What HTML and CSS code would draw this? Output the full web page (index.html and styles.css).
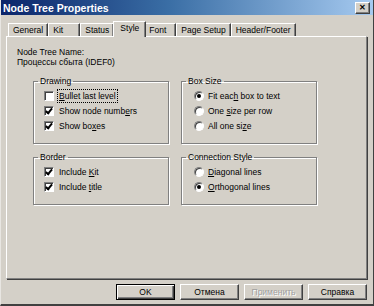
FILE: index.html
```html
<!DOCTYPE html>
<html lang="ru">
<head>
    <meta charset="UTF-8">
    <title>Node Tree Properties</title>
    <link rel="stylesheet" href="styles.css">
</head>
<body>
    <div class="window">
        <div class="titlebar">
            <span class="title">Node Tree Properties</span>
            <button class="close">&#x2715;</button>
        </div>
        <div class="tabs">
            <div class="tab">General</div>
            <div class="tab">Kit</div>
            <div class="tab">Status</div>
            <div class="tab active">Style</div>
            <div class="tab">Font</div>
            <div class="tab">Page Setup</div>
            <div class="tab">Header/Footer</div>
        </div>
        <div class="panel">
            <div class="name-label">Node Tree Name:</div>
            <div class="name-value">Процессы сбыта (IDEF0)</div>
            <div class="groups">
                <fieldset class="group">
                    <legend>Drawing</legend>
                    <div class="opt"><span class="check"></span><span class="focus"><u>B</u>ullet last level</span></div>
                    <div class="opt"><span class="check on"></span><span>Show node numb<u>e</u>rs</span></div>
                    <div class="opt"><span class="check on"></span><span>Show bo<u>x</u>es</span></div>
                </fieldset>
                <fieldset class="group">
                    <legend>Box Size</legend>
                    <div class="opt"><span class="radio on"></span><span>Fit eac<u>h</u> box to text</span></div>
                    <div class="opt"><span class="radio"></span><span>One <u>s</u>ize per row</span></div>
                    <div class="opt"><span class="radio"></span><span>All one si<u>z</u>e</span></div>
                </fieldset>
                <fieldset class="group">
                    <legend>Border</legend>
                    <div class="opt"><span class="check on"></span><span>Include <u>K</u>it</span></div>
                    <div class="opt"><span class="check on"></span><span>Include <u>t</u>itle</span></div>
                </fieldset>
                <fieldset class="group">
                    <legend>Connection Style</legend>
                    <div class="opt"><span class="radio"></span><span><u>D</u>iagonal lines</span></div>
                    <div class="opt"><span class="radio on"></span><span><u>O</u>rthogonal lines</span></div>
                </fieldset>
            </div>
        </div>
        <div class="buttons">
            <button class="btn default">OK</button>
            <button class="btn">Отмена</button>
            <button class="btn" disabled>Применить</button>
            <button class="btn">Справка</button>
        </div>
    </div>
</body>
</html>
```

FILE: styles.css
```css
html, body {
    margin: 0;
    padding: 0;
    background: #d4d0c8;
}
body {
    font-family: "Liberation Sans", Arial, sans-serif;
    font-size: 8.5px;
    color: #000;
}
.window {
    width: 374px;
    height: 306px;
    box-sizing: border-box;
    background: #d4d0c8;
    border-left: 1px solid #e8e6e2;
    border-right: 1px solid #404040;
    border-bottom: 2px solid #404040;
    display: flex;
    flex-direction: column;
}
.titlebar {
    height: 15px;
    flex: none;
    display: flex;
    align-items: center;
    justify-content: space-between;
    padding: 0 3px 0 2px;
    background: linear-gradient(to right, #0a246a 0%, #3a6ea5 45%, #a6caf0 100%);
}
.title {
    color: #fff;
    font-weight: bold;
    font-size: 10.5px;
}
.close {
    width: 15px;
    height: 12px;
    padding: 0;
    font-size: 8px;
    font-weight: bold;
    line-height: 9px;
    color: #000;
    background: #d4d0c8;
    border: 1px solid;
    border-color: #fff #404040 #404040 #fff;
    box-shadow: inset -1px -1px 0 #808080;
}
.tabs {
    display: flex;
    align-items: flex-end;
    height: 16px;
    margin: 5px 0 0 7px;
    position: relative;
    z-index: 1;
}
.tab {
    height: 13px;
    box-sizing: border-box;
    min-width: 32px;
    padding: 0 4px;
    line-height: 12px;
    border: 1px solid;
    border-color: #fff #404040 transparent #fff;
    border-bottom: none;
    box-shadow: inset -1px 0 0 #808080;
}
.tab.active {
    height: 16px;
    margin: 0 -2px 0 -1px;
    padding: 0 6px;
    line-height: 13px;
    background: #d4d0c8;
    position: relative;
    top: 1px;
}
.panel {
    height: 243px;
    flex: none;
    box-sizing: border-box;
    margin: 0 6px 0 5px;
    padding: 10px 0 0 10px;
    border: 1px solid;
    border-color: #fff #808080 #808080 #fff;
    box-shadow: 1px 1px 0 #404040;
}
.name-label,
.name-value {
    line-height: 10px;
}
.groups {
    display: grid;
    grid-template-columns: 136px 136px;
    column-gap: 12px;
    row-gap: 8px;
    margin: 9px 0 0 16px;
}
.group {
    margin: 0;
    padding: 2px 0 10px 10px;
    border: 1px solid #808080;
    box-shadow: inset 1px 1px 0 #fff, 1px 1px 0 #fff;
    min-width: 0;
}
.group legend {
    padding: 0 2px;
    margin-left: -6px;
    line-height: 10px;
}
.opt {
    height: 15px;
    display: flex;
    align-items: center;
    gap: 5px;
    white-space: nowrap;
}
.check {
    width: 10px;
    height: 10px;
    box-sizing: border-box;
    flex: none;
    background: #fff;
    border: 1px solid;
    border-color: #808080 #fff #fff #808080;
    box-shadow: inset 1px 1px 0 #404040;
    position: relative;
}
.check.on::after {
    content: "";
    position: absolute;
    left: 2px;
    top: 0;
    width: 2px;
    height: 5px;
    border: solid #000;
    border-width: 0 2px 2px 0;
    transform: rotate(40deg);
}
.radio {
    width: 10px;
    height: 10px;
    box-sizing: border-box;
    flex: none;
    margin-left: 2px;
    margin-right: -1px;
    border-radius: 50%;
    background: #fff;
    border: 1px solid;
    border-color: #808080 #fff #fff #808080;
    box-shadow: inset 1px 1px 0 #404040;
    position: relative;
}
.radio.on::after {
    content: "";
    position: absolute;
    left: 2px;
    top: 2px;
    width: 4px;
    height: 4px;
    border-radius: 50%;
    background: #000;
}
.focus {
    outline: 1px dotted #000;
    outline-offset: 1px;
}
.buttons {
    display: flex;
    justify-content: flex-end;
    gap: 5px;
    margin: 5px 6px 0 0;
}
.btn {
    width: 59px;
    height: 16px;
    padding: 0;
    font-family: inherit;
    font-size: 8.5px;
    color: #000;
    background: #d4d0c8;
    border: 1px solid;
    border-color: #fff #404040 #404040 #fff;
    box-shadow: inset -1px -1px 0 #808080;
}
.btn.default {
    border-color: #000;
    box-shadow: inset 1px 1px 0 #fff, inset -1px -1px 0 #404040, inset -2px -2px 0 #808080;
}
.btn:disabled {
    color: #a0a0a0;
    text-shadow: 1px 1px 0 #fff;
}
```
